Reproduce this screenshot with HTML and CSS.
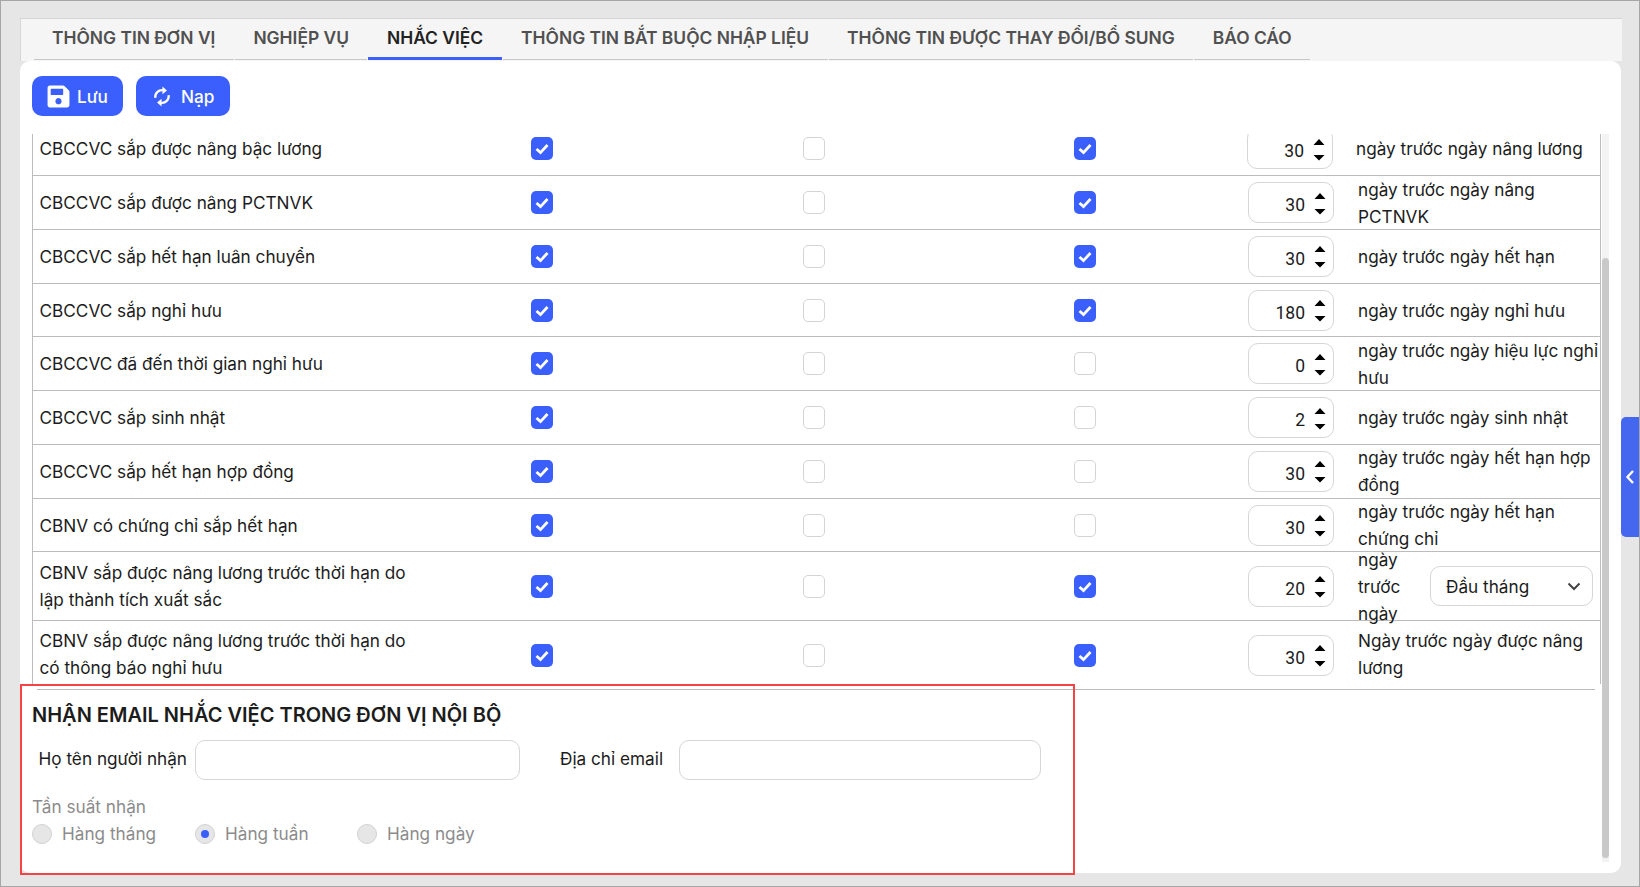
FILE: index.html
```html
<!DOCTYPE html>
<html lang="vi">
<head>
<meta charset="utf-8">
<title>Nhắc việc</title>
<link rel="stylesheet" href="styles.css">
</head>
<body>
<div class="frame">
  <nav class="tabs">
    <a class="tab">THÔNG TIN ĐƠN VỊ</a>
    <a class="tab">NGHIỆP VỤ</a>
    <a class="tab active">NHẮC VIỆC</a>
    <a class="tab">THÔNG TIN BẮT BUỘC NHẬP LIỆU</a>
    <a class="tab">THÔNG TIN ĐƯỢC THAY ĐỔI/BỔ SUNG</a>
    <a class="tab">BÁO CÁO</a>
  </nav>
  <main class="card">
    <div class="toolbar">
      <button class="btn btn-save"><svg class="ic-save" viewBox="0 0 448 512"><path fill="#fff" d="M433.941 129.941l-83.882-83.882A48 48 0 0 0 316.118 32H48C21.49 32 0 53.49 0 80v352c0 26.51 21.49 48 48 48h352c26.51 0 48-21.49 48-48V163.882a48 48 0 0 0-14.059-33.941zM224 416c-35.346 0-64-28.654-64-64 0-35.346 28.654-64 64-64s64 28.654 64 64c0 35.346-28.654 64-64 64zm96-304.52V212c0 6.627-5.373 12-12 12H76c-6.627 0-12-5.373-12-12V108c0-6.627 5.373-12 12-12h228.52c3.183 0 6.235 1.264 8.485 3.515l3.48 3.48A11.996 11.996 0 0 1 320 111.48z"/></svg>Lưu</button>
      <button class="btn btn-load"><svg class="ic-sync" viewBox="0 0 20 22" fill="none" stroke="#fff" stroke-width="2.5"><path d="M2.600 12.500A7.500 7.500 0 0 1 11 4"/><path d="M17.400 9.500A7.500 7.500 0 0 1 9 18"/><path fill="#fff" stroke="none" d="M10.500 0l5 4.200-5 4.300z"/><path fill="#fff" stroke="none" d="M9.500 13.500v8.500l-5-4.200z"/></svg>Nạp</button>
    </div>
    <div class="scroller">
      <div class="table">
        <div class="row row-first"><div class="name">CBCCVC sắp được nâng bậc lương</div><div class="cell"><span class="cb on"><svg viewBox="0 0 22 23"><path d="M5.500 12l4 3.600 7-7.600"/></svg></span></div><div class="cell"><span class="cb"></span></div><div class="cell"><span class="cb on"><svg viewBox="0 0 22 23"><path d="M5.500 12l4 3.600 7-7.600"/></svg></span></div><div class="num"><span class="val">30</span><svg class="spin" viewBox="0 0 12 22"><path d="M6 0l5.500 6H.5zM.5 16h11L6 21.500z"/></svg></div><div class="note">ngày trước ngày nâng lương</div></div>

        <div class="row"><div class="name">CBCCVC sắp được nâng PCTNVK</div><div class="cell"><span class="cb on"><svg viewBox="0 0 22 23"><path d="M5.500 12l4 3.600 7-7.600"/></svg></span></div><div class="cell"><span class="cb"></span></div><div class="cell"><span class="cb on"><svg viewBox="0 0 22 23"><path d="M5.500 12l4 3.600 7-7.600"/></svg></span></div><div class="num"><span class="val">30</span><svg class="spin" viewBox="0 0 12 22"><path d="M6 0l5.500 6H.5zM.5 16h11L6 21.500z"/></svg></div><div class="note">ngày trước ngày nâng PCTNVK</div></div>

        <div class="row"><div class="name">CBCCVC sắp hết hạn luân chuyển</div><div class="cell"><span class="cb on"><svg viewBox="0 0 22 23"><path d="M5.500 12l4 3.600 7-7.600"/></svg></span></div><div class="cell"><span class="cb"></span></div><div class="cell"><span class="cb on"><svg viewBox="0 0 22 23"><path d="M5.500 12l4 3.600 7-7.600"/></svg></span></div><div class="num"><span class="val">30</span><svg class="spin" viewBox="0 0 12 22"><path d="M6 0l5.500 6H.5zM.5 16h11L6 21.500z"/></svg></div><div class="note">ngày trước ngày hết hạn</div></div>

        <div class="row"><div class="name">CBCCVC sắp nghỉ hưu</div><div class="cell"><span class="cb on"><svg viewBox="0 0 22 23"><path d="M5.500 12l4 3.600 7-7.600"/></svg></span></div><div class="cell"><span class="cb"></span></div><div class="cell"><span class="cb on"><svg viewBox="0 0 22 23"><path d="M5.500 12l4 3.600 7-7.600"/></svg></span></div><div class="num"><span class="val">180</span><svg class="spin" viewBox="0 0 12 22"><path d="M6 0l5.500 6H.5zM.5 16h11L6 21.500z"/></svg></div><div class="note">ngày trước ngày nghỉ hưu</div></div>

        <div class="row"><div class="name">CBCCVC đã đến thời gian nghỉ hưu</div><div class="cell"><span class="cb on"><svg viewBox="0 0 22 23"><path d="M5.500 12l4 3.600 7-7.600"/></svg></span></div><div class="cell"><span class="cb"></span></div><div class="cell"><span class="cb"></span></div><div class="num"><span class="val">0</span><svg class="spin" viewBox="0 0 12 22"><path d="M6 0l5.500 6H.5zM.5 16h11L6 21.500z"/></svg></div><div class="note">ngày trước ngày hiệu lực nghỉ hưu</div></div>

        <div class="row"><div class="name">CBCCVC sắp sinh nhật</div><div class="cell"><span class="cb on"><svg viewBox="0 0 22 23"><path d="M5.500 12l4 3.600 7-7.600"/></svg></span></div><div class="cell"><span class="cb"></span></div><div class="cell"><span class="cb"></span></div><div class="num"><span class="val">2</span><svg class="spin" viewBox="0 0 12 22"><path d="M6 0l5.500 6H.5zM.5 16h11L6 21.500z"/></svg></div><div class="note">ngày trước ngày sinh nhật</div></div>

        <div class="row"><div class="name">CBCCVC sắp hết hạn hợp đồng</div><div class="cell"><span class="cb on"><svg viewBox="0 0 22 23"><path d="M5.500 12l4 3.600 7-7.600"/></svg></span></div><div class="cell"><span class="cb"></span></div><div class="cell"><span class="cb"></span></div><div class="num"><span class="val">30</span><svg class="spin" viewBox="0 0 12 22"><path d="M6 0l5.500 6H.5zM.5 16h11L6 21.500z"/></svg></div><div class="note">ngày trước ngày hết hạn hợp đồng</div></div>

        <div class="row"><div class="name">CBNV có chứng chỉ sắp hết hạn</div><div class="cell"><span class="cb on"><svg viewBox="0 0 22 23"><path d="M5.500 12l4 3.600 7-7.600"/></svg></span></div><div class="cell"><span class="cb"></span></div><div class="cell"><span class="cb"></span></div><div class="num"><span class="val">30</span><svg class="spin" viewBox="0 0 12 22"><path d="M6 0l5.500 6H.5zM.5 16h11L6 21.500z"/></svg></div><div class="note">ngày trước ngày hết hạn chứng chỉ</div></div>

        <div class="row row-tall"><div class="name">CBNV sắp được nâng lương trước thời hạn do lập thành tích xuất sắc</div><div class="cell"><span class="cb on"><svg viewBox="0 0 22 23"><path d="M5.500 12l4 3.600 7-7.600"/></svg></span></div><div class="cell"><span class="cb"></span></div><div class="cell"><span class="cb on"><svg viewBox="0 0 22 23"><path d="M5.500 12l4 3.600 7-7.600"/></svg></span></div><div class="num"><span class="val">20</span><svg class="spin" viewBox="0 0 12 22"><path d="M6 0l5.500 6H.5zM.5 16h11L6 21.500z"/></svg></div><div class="note note-split"><div class="note-narrow">ngày trước ngày</div><div class="select">Đầu tháng<svg class="chev" viewBox="0 0 14 9"><path d="M1.500 1.500 7 7l5.500-5.500"/></svg></div></div></div>

        <div class="row row-last"><div class="name">CBNV sắp được nâng lương trước thời hạn do có thông báo nghỉ hưu</div><div class="cell"><span class="cb on"><svg viewBox="0 0 22 23"><path d="M5.500 12l4 3.600 7-7.600"/></svg></span></div><div class="cell"><span class="cb"></span></div><div class="cell"><span class="cb on"><svg viewBox="0 0 22 23"><path d="M5.500 12l4 3.600 7-7.600"/></svg></span></div><div class="num"><span class="val">30</span><svg class="spin" viewBox="0 0 12 22"><path d="M6 0l5.500 6H.5zM.5 16h11L6 21.500z"/></svg></div><div class="note">Ngày trước ngày được nâng lương</div></div>
      </div>
      <hr class="rule">
      <section class="email">
        <h2 class="email-title">NHẬN EMAIL NHẮC VIỆC TRONG ĐƠN VỊ NỘI BỘ</h2>
        <div class="email-form">
          <label class="lbl lbl-name">Họ tên người nhận</label><input class="field field-name" type="text">
          <label class="lbl lbl-mail">Địa chỉ email</label><input class="field field-mail" type="text">
        </div>
        <div class="freq-title">Tần suất nhận</div>
        <div class="freq">
          <span class="radio-item"><span class="radio"></span>Hàng tháng</span>
          <span class="radio-item"><span class="radio checked"></span>Hàng tuần</span>
          <span class="radio-item"><span class="radio"></span>Hàng ngày</span>
        </div>
      </section>
      <div class="track"><div class="thumb"></div></div>
    </div>
  </main>
  <div class="side-tab"><svg viewBox="0 0 10 16"><path d="M8 2 2.500 8 8 14"/></svg></div>
  <div class="annot"></div>
</div>
</body>
</html>
```

FILE: styles.css
```css
* { box-sizing: border-box; }
html, body { margin: 0; padding: 0; }
body { font-family: Inter, "Liberation Sans", sans-serif; color: #1c1c1c; overflow: hidden; }

.frame {
  position: relative;
  width: 1640px;
  height: 887px;
  background: #e6e6e6;
  border: 1px solid #a6a6a6;
  padding: 17px 17px 0 19px;
}

.tabs {
  display: flex;
  height: 43px;
  padding-left: 12.5px;
  background: #f5f5f5;
  border-top: 1px solid #d6d6d6;
  border-left: 1px solid #d6d6d6;
  gap: 1px;
}
.tab {
  padding: 0 18.5px;
  font-size: 17.4px;
  font-weight: 600;
  line-height: 38px;
  color: #505050;
  white-space: nowrap;
  border-bottom: 1px solid #c8c8c8;
  height: 41px;
}
.tab.active {
  color: #222;
  border-bottom: 3px solid #3d5ffb;
}

.card {
  height: 812px;
  margin-right: 1px;
  background: #fff;
  border-radius: 10px;
  padding: 15px 12px 0 12px;
  margin-top: 0;
}

.toolbar { display: flex; gap: 13px; height: 40px; }
.btn {
  display: flex;
  align-items: center;
  height: 40px;
  border: 0;
  border-radius: 10px;
  background: #3a5ffc;
  color: #fff;
  font: 500 17.2px Inter, sans-serif;
  padding: 0;
}
.btn-save { width: 91px; padding-left: 15px; gap: 7px; }
.btn-load { width: 94px; padding-left: 17px; gap: 10px; }
.ic-save { width: 23px; height: 25px; }
.ic-sync { width: 18px; height: 21px; }

.scroller {
  position: relative;
  height: 728px;
  margin-top: 18px;
  overflow: hidden;
}

.table {
  margin-top: -11.6px;
  width: 1569px;
  border-left: 1px solid #bcbcbc;
  border-right: 1px solid #bcbcbc;
}
.row {
  display: grid;
  grid-template-columns: 373.5px 271.5px 272px 270px 114px 266px;
  grid-template-rows: minmax(0, 1fr);
  align-items: center;
  height: 53.75px;
  border-bottom: 1px solid #bcbcbc;
  font-size: 17.2px;
  line-height: 27px;
}
.row-first { grid-template-columns: 373.5px 271.5px 272px 270px 112px 268px; }
.row-first .num { margin-left: 27px; }
.row-tall { height: 68.4px; }
.row-last { height: 63px; padding-top: 6px; border-bottom: 0; }
.row-last .name, .row-last .note { margin-top: -2px; }

.name { padding-left: 6.5px; margin-right: -7px; }
.cell { display: flex; justify-content: center; }

.cb {
  display: block;
  width: 22px;
  height: 23px;
  border: 1px solid #d4d4d4;
  border-radius: 5px;
  background: #fff;
}
.cb.on { background: #3a5ffc; border: 0; }
.cb svg { display: block; width: 22px; height: 23px; }
.cb svg path { fill: none; stroke: #fff; stroke-width: 2.8; }

.num {
  display: flex;
  align-items: center;
  justify-content: flex-end;
  width: 86px;
  height: 41px;
  margin-left: 28px;
  padding-right: 7px;
  border: 1px solid #d6d6d6;
  border-radius: 10px;
  gap: 9px;
}
.val { position: relative; top: 3px; font-family: Roboto, sans-serif; font-size: 17.5px; }
.spin { width: 12px; height: 22px; fill: #000; margin-top: 2px; }

.note { padding-left: 24px; }
.note-split { display: flex; align-items: center; }
.note-narrow { width: 72px; flex: none; }
.select {
  display: flex;
  align-items: center;
  justify-content: space-between;
  width: 163px;
  height: 40px;
  padding: 0 11px 0 15px;
  border: 1px solid #d6d6d6;
  border-radius: 10px;
}
.chev { width: 14px; height: 9px; }
.chev path { fill: none; stroke: #444; stroke-width: 2; }

.rule {
  width: 1558px;
  height: 1px;
  margin: 5.4px 0 0 5px;
  border: 0;
  background: #bcbcbc;
}

.email { padding-top: 12px; }
.email-title {
  margin: 0;
  font-size: 20px;
  font-weight: 600;
  line-height: 26px;
  color: #1c1c1c;
}
.email-form {
  display: flex;
  align-items: center;
  margin-top: 12px;
}
.lbl { font-size: 17.2px; position: relative; top: -2px; }
.lbl-name { margin-left: 6.5px; width: 156.5px; }
.lbl-mail { margin-left: 40px; width: 119px; }
.field {
  display: block;
  height: 40px;
  border: 1px solid #d6d6d6;
  border-radius: 10px;
  background: #fff;
}
.field-name { width: 325px; }
.field-mail { width: 362px; }

.freq-title {
  margin-top: 13px;
  font-size: 17.2px;
  line-height: 27px;
  color: #8c8c8c;
}
.freq {
  display: flex;
  font-size: 17.2px;
  line-height: 27px;
  color: #8c8c8c;
}
.radio-item { display: flex; align-items: center; gap: 10px; }
.radio-item:nth-child(1) { width: 163px; }
.radio-item:nth-child(2) { width: 162px; }
.radio {
  position: relative;
  width: 20px;
  height: 20px;
  border: 1px solid #d2d2d2;
  border-radius: 50%;
  background: #e6e6e6;
}
.radio.checked::after {
  content: "";
  position: absolute;
  left: 5px;
  top: 5px;
  width: 8px;
  height: 8px;
  border-radius: 50%;
  background: #3a5ffc;
}

.track {
  position: absolute;
  left: 1570px;
  top: 0;
  width: 7px;
  height: 728px;
  background: #f3f3f3;
}
.thumb {
  position: absolute;
  left: 0;
  top: 124px;
  width: 7px;
  height: 600px;
  border-radius: 4px;
  background: #c9c9c9;
}

.side-tab {
  position: absolute;
  left: 1620px;
  top: 416px;
  width: 18px;
  height: 120px;
  border-radius: 5px 0 0 5px;
  background: #4566ee;
  display: flex;
  align-items: center;
  justify-content: center;
}
.side-tab svg { width: 10px; height: 16px; }
.side-tab path { fill: none; stroke: #fff; stroke-width: 2.4; }

.annot {
  position: absolute;
  left: 19px;
  top: 683px;
  width: 1055px;
  height: 191px;
  border: 2px solid #f44445;
  pointer-events: none;
}
```
